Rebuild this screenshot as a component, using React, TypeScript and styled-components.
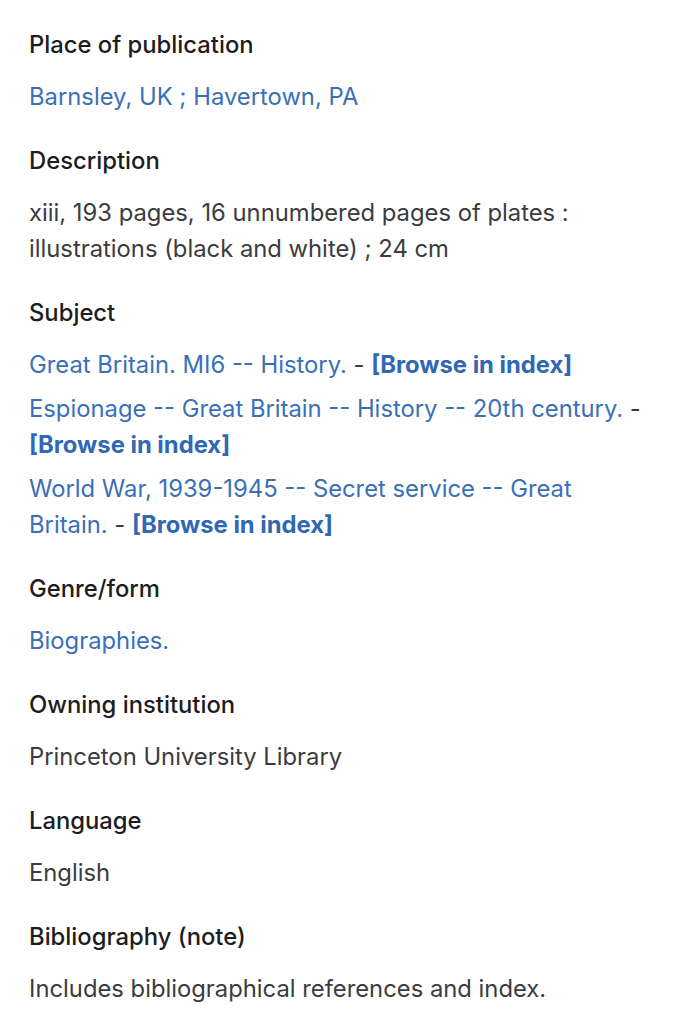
import React, { FC } from 'react'
import styled, { createGlobalStyle } from 'styled-components'

const GlobalStyle = createGlobalStyle`
	body {
		margin: 0;
		background: #ffffff;
		font-family: Inter, 'Noto Sans', 'Liberation Sans', sans-serif;
		-webkit-font-smoothing: antialiased;
	}
`

const Page = styled.div`
	display: flex;
	flex-direction: column;
	gap: 28px;
	padding: 27px 44px 20px 29px;
`

const Section = styled.section`
	display: flex;
	flex-direction: column;
	gap: 16px;
`

const Label = styled.h3`
	margin: 0;
	font-size: 23.8px;
	line-height: 36px;
	font-weight: 500;
	color: #1d1d1f;
`

const Values = styled.div`
	display: flex;
	flex-direction: column;
	gap: 8px;
`

const Value = styled.p<{ $link?: boolean }>`
	margin: 0;
	font-size: 23.8px;
	line-height: 36px;
	font-weight: 400;
	color: ${(p) => (p.$link ? '#3a70b8' : '#3c3c3f')};
`

const Dash = styled.span`
	color: #3c3c3f;
`

const Browse = styled.a`
	color: #3068b3;
	font-weight: 700;
	text-decoration: none;
`

interface Entry {
	text: string
	link?: boolean
	browse?: boolean
}

interface Field {
	label: string
	values: Entry[]
}

const fields: Field[] = [
	{ label: 'Place of publication', values: [{ text: 'Barnsley, UK ; Havertown, PA', link: true }] },
	{
		label: 'Description',
		values: [{ text: 'xiii, 193 pages, 16 unnumbered pages of plates : illustrations (black and white) ; 24 cm' }],
	},
	{
		label: 'Subject',
		values: [
			{ text: 'Great Britain. MI6 -- History.', link: true, browse: true },
			{ text: 'Espionage -- Great Britain -- History -- 20th century.', link: true, browse: true },
			{ text: 'World War, 1939-1945 -- Secret service -- Great Britain.', link: true, browse: true },
		],
	},
	{ label: 'Genre/form', values: [{ text: 'Biographies.', link: true }] },
	{ label: 'Owning institution', values: [{ text: 'Princeton University Library' }] },
	{ label: 'Language', values: [{ text: 'English' }] },
	{ label: 'Bibliography (note)', values: [{ text: 'Includes bibliographical references and index.' }] },
]

const App: FC = () => {
	return (
		<>
			<GlobalStyle />
			<Page>
				{fields.map((field) => (
					<Section key={field.label}>
						<Label>{field.label}</Label>
						<Values>
							{field.values.map((v, i) => (
								<Value key={i} $link={v.link}>
									{v.text}
									{v.browse && (
										<>
											<Dash> - </Dash>
											<Browse href="#">[Browse in index]</Browse>
										</>
									)}
								</Value>
							))}
						</Values>
					</Section>
				))}
			</Page>
		</>
	)
}

export default App
